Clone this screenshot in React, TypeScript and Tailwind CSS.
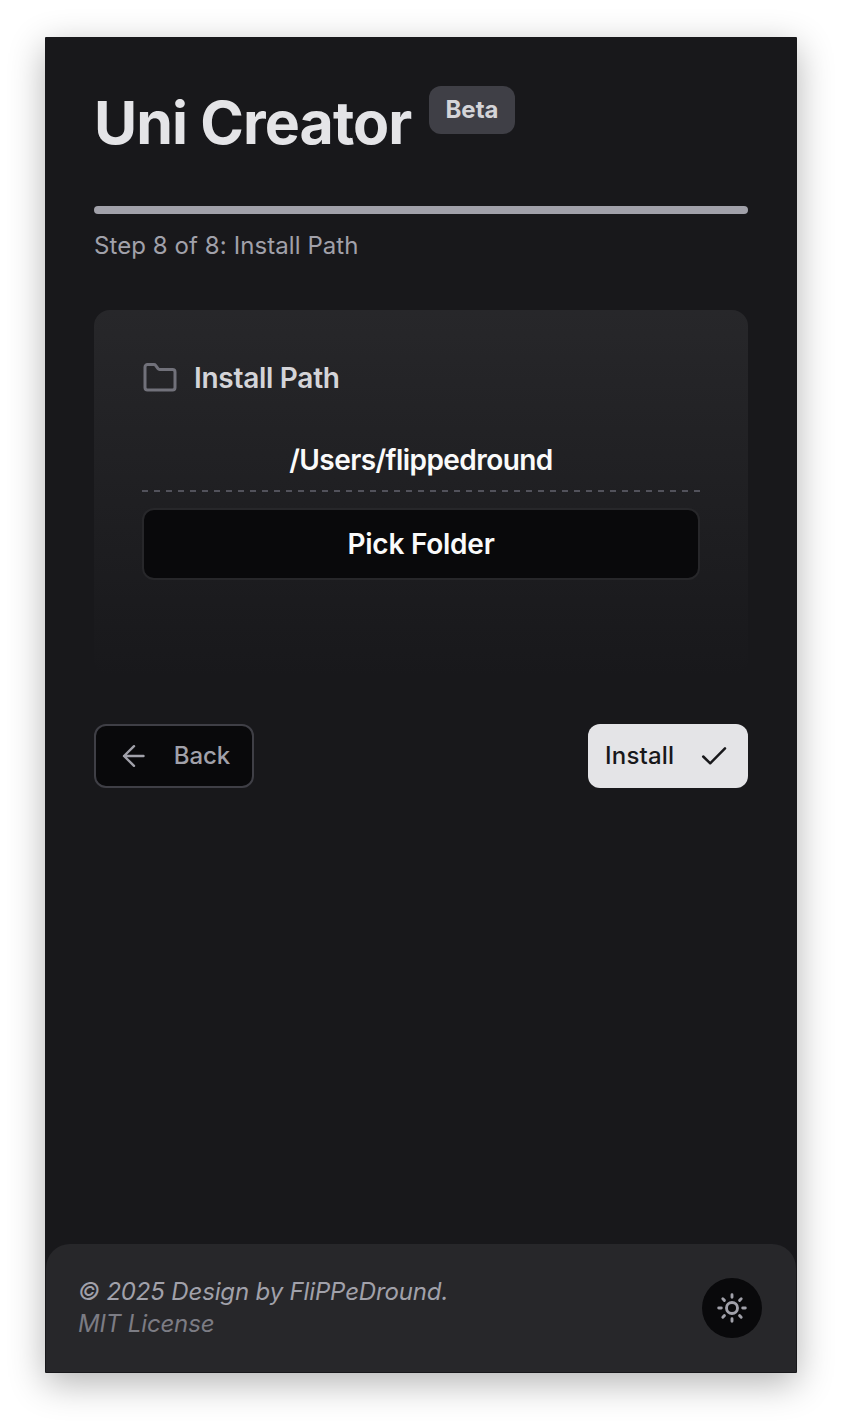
import React from "react";

function FolderIcon() {
  return (
    <svg viewBox="0 0 36 36" className="h-9 w-9 shrink-0 text-[#71717a]" fill="none" stroke="currentColor" strokeWidth="3" strokeLinejoin="round" strokeLinecap="round">
      <path d="M5.500 4.500H12a2 2 0 0 1 1.600.8L16 8.600a2 2 0 0 0 1.600.8H30.500a2.500 2.500 0 0 1 2.500 2.500V27.500a2.500 2.500 0 0 1-2.500 2.500H5.500A2.500 2.500 0 0 1 3 27.500V7a2.500 2.500 0 0 1 2.500-2.500Z" />
    </svg>
  );
}

function ArrowLeftIcon() {
  return (
    <svg viewBox="0 0 24 24" className="h-6 w-6" fill="none" stroke="currentColor" strokeWidth="2.400" strokeLinecap="round" strokeLinejoin="round">
      <path d="M21.500 12H2M12 2.200 2 12l10 9.800" />
    </svg>
  );
}

function CheckIcon() {
  return (
    <svg viewBox="0 0 26 20" className="h-5 w-[26px]" fill="none" stroke="currentColor" strokeWidth="2.500" strokeLinecap="round" strokeLinejoin="round">
      <path d="M2.200 10.500 9.200 17.300 24 2.300" />
    </svg>
  );
}

function SunIcon() {
  return (
    <svg viewBox="0 0 32 32" className="h-8 w-8" fill="none" stroke="currentColor" strokeWidth="2.900" strokeLinecap="round">
      <circle cx="16" cy="16" r="5.500" />
      <path d="M16 2.700v2.600M16 26.700v2.600M2.700 16h2.600M26.700 16h2.600M6.800 6.800l1.600 1.600M23.600 23.600l1.600 1.600M6.800 25.200l1.600-1.600M23.600 8.400l1.600-1.600" />
    </svg>
  );
}

export default function App() {
  return (
    <div className="h-[1426px] w-[842px] bg-white px-[45px] pt-[37px] font-['Inter',sans-serif]">
      <main className="flex h-[1336px] w-[752px] flex-col overflow-hidden rounded-[1px] bg-[#18181b] p-px shadow-[0_10px_36px_rgba(0,0,0,0.3)]">
        <div className="flex flex-1 flex-col px-12 pt-12">
          <header className="flex h-[120px] items-start">
            <h1 className="mt-[7px] w-[335px] whitespace-nowrap text-[59px] leading-[60px] font-bold tracking-[-0.9px] text-[#e4e4e7]">Uni Creator</h1>
            <span className="flex h-12 w-[86px] items-center justify-center rounded-xl bg-[#3f3f46] text-2xl font-bold text-[#d4d4d8]">Beta</span>
          </header>
          <div className="h-2 shrink-0 rounded-full bg-[#a1a1aa]" />
          <p className="mt-4 h-8 text-2xl leading-8 tracking-[0.08px] text-[#a1a1aa]">Step 8 of 8: Install Path</p>
          <section className="mt-12 flex h-[366px] flex-col rounded-2xl bg-linear-to-b from-[#27272a] to-[#18181b] px-12 pt-12">
            <div className="flex h-10 items-center gap-4">
              <FolderIcon />
              <h2 className="text-[28px] leading-10 font-[560] tracking-[-0.28px] text-[#d4d4d8]">Install Path</h2>
            </div>
            <div className="mt-[42px] h-[50px] text-center text-[28px] leading-10 font-[560] tracking-[-0.56px] text-[#fafafa]">/Users/flippedround</div>
            <svg className="h-0.5 w-full" viewBox="0 0 558 2">
              <path d="M0 1h558" stroke="#52525b" strokeWidth="2" strokeDasharray="6 6" />
            </svg>
            <button className="mt-4 h-[72px] w-full rounded-xl border-2 border-[#27272a] bg-[#09090b] text-[28px] font-[560] tracking-[-0.25px] text-[#fafafa]">Pick Folder</button>
          </section>
          <div className="mt-12 flex justify-between">
            <button className="flex h-16 w-40 items-center justify-between rounded-xl border-2 border-[#3f3f46] bg-[#09090b] pr-[22px] pl-[26px] text-2xl font-[540] tracking-[-0.1px] text-[#a1a1aa]">
              <ArrowLeftIcon />
              Back
            </button>
            <button className="flex h-16 w-40 items-center justify-between rounded-xl bg-[#e4e4e7] pr-[21px] pl-[17px] text-2xl font-medium tracking-[0.2px] text-[#18181b]">
              Install
              <CheckIcon />
            </button>
          </div>
        </div>
        <footer className="flex h-32 items-center justify-between rounded-t-3xl bg-[#27272a] pr-[34px] pl-8">
          <div className="text-2xl leading-8 font-[430] tracking-[-0.15px] italic">
            <p className="text-[#a1a1aa]">© 2025 Design by FliPPeDround.</p>
            <p className="text-[#7c7c84]">MIT License</p>
          </div>
          <button className="flex h-[60px] w-[60px] items-center justify-center rounded-full bg-[#09090b] text-[#a1a1aa]">
            <SunIcon />
          </button>
        </footer>
      </main>
    </div>
  );
}
